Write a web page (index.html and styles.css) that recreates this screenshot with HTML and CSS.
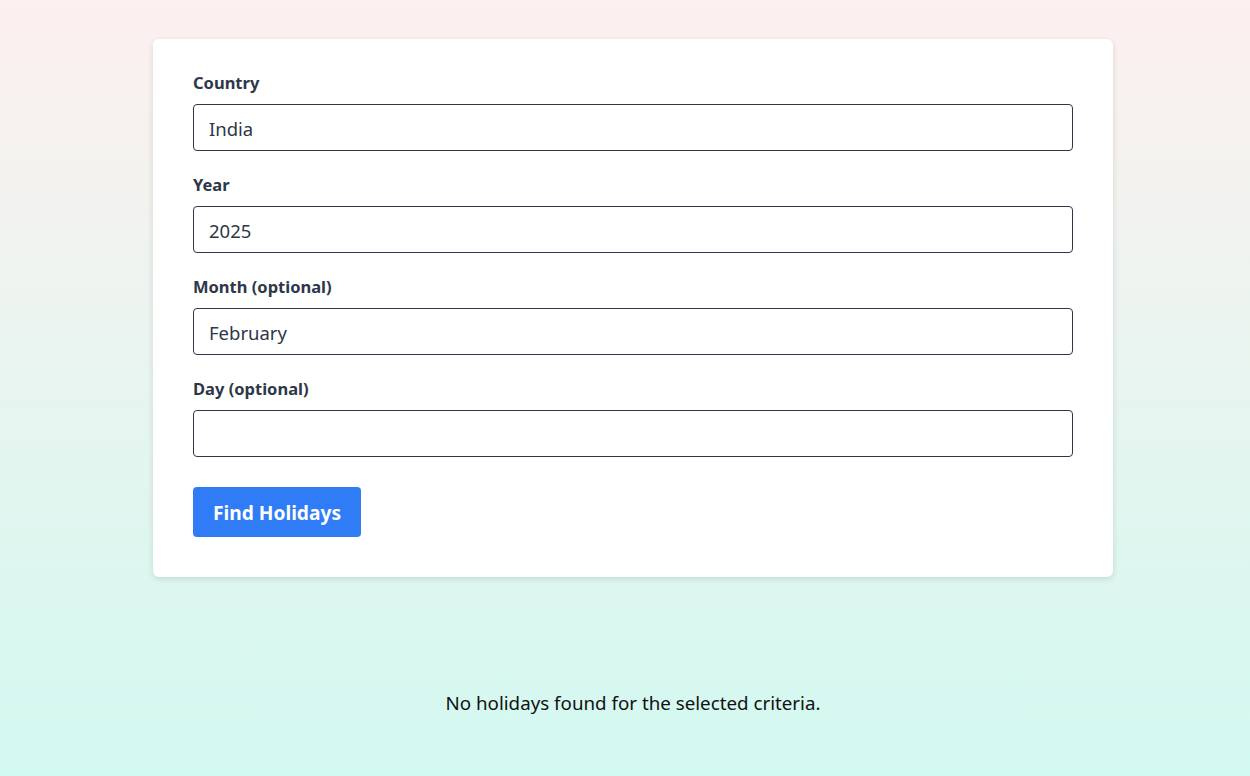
FILE: index.html
```html
<!DOCTYPE html>
<html lang="en">
<head>
<meta charset="utf-8">
<title>Holiday Finder</title>
<link rel="stylesheet" href="styles.css">
</head>
<body>
<main class="page">
  <form class="card">
    <div class="field">
      <label class="label" for="country">Country</label>
      <input class="input" id="country" type="text" value="India">
    </div>
    <div class="field">
      <label class="label" for="year">Year</label>
      <input class="input" id="year" type="text" value="2025">
    </div>
    <div class="field">
      <label class="label" for="month">Month (optional)</label>
      <input class="input" id="month" type="text" value="February">
    </div>
    <div class="field">
      <label class="label" for="day">Day (optional)</label>
      <input class="input" id="day" type="text" value="">
    </div>
    <button class="btn" type="button">Find Holidays</button>
  </form>
  <p class="message">No holidays found for the selected criteria.</p>
</main>
</body>
</html>
```
FILE: styles.css
```css
html, body {
  margin: 0;
  padding: 0;
  height: 100%;
}
body {
  background: linear-gradient(180deg, #fdf0ef 0%, #d2f9f0 100%);
  font-family: "Noto Sans", "Open Sans", sans-serif;
  color: #111;
}
.page {
  display: flex;
  flex-direction: column;
  align-items: center;
  padding: 39px 0 0 16px;
}
.card {
  width: 960px;
  box-sizing: border-box;
  background: #fff;
  border-radius: 6px;
  box-shadow: 0 2px 6px rgba(0, 0, 0, 0.12);
  padding: 33px 40px 40px;
  display: flex;
  flex-direction: column;
}
.field {
  display: flex;
  flex-direction: column;
  margin-bottom: 23px;
}
.label {
  font-size: 16.5px;
  font-weight: 700;
  color: #2d3748;
  line-height: 22px;
  margin-bottom: 10px;
}
.input {
  height: 47px;
  box-sizing: border-box;
  border: 1px solid #2d3748;
  border-radius: 4px;
  padding: 1px 15px 0;
  font-family: inherit;
  font-size: 18.5px;
  color: #2d3748;
  background: #fff;
}
.btn {
  align-self: flex-start;
  margin-top: 7px;
  width: 168px;
  height: 50px;
  border: none;
  border-radius: 4px;
  background: #2f7cf6;
  color: #fff;
  font-family: inherit;
  font-size: 19.2px;
  font-weight: 700;
  cursor: pointer;
}
.message {
  margin: 114px 0 0;
  font-size: 18.75px;
  line-height: 24px;
  color: #111;
}
```
